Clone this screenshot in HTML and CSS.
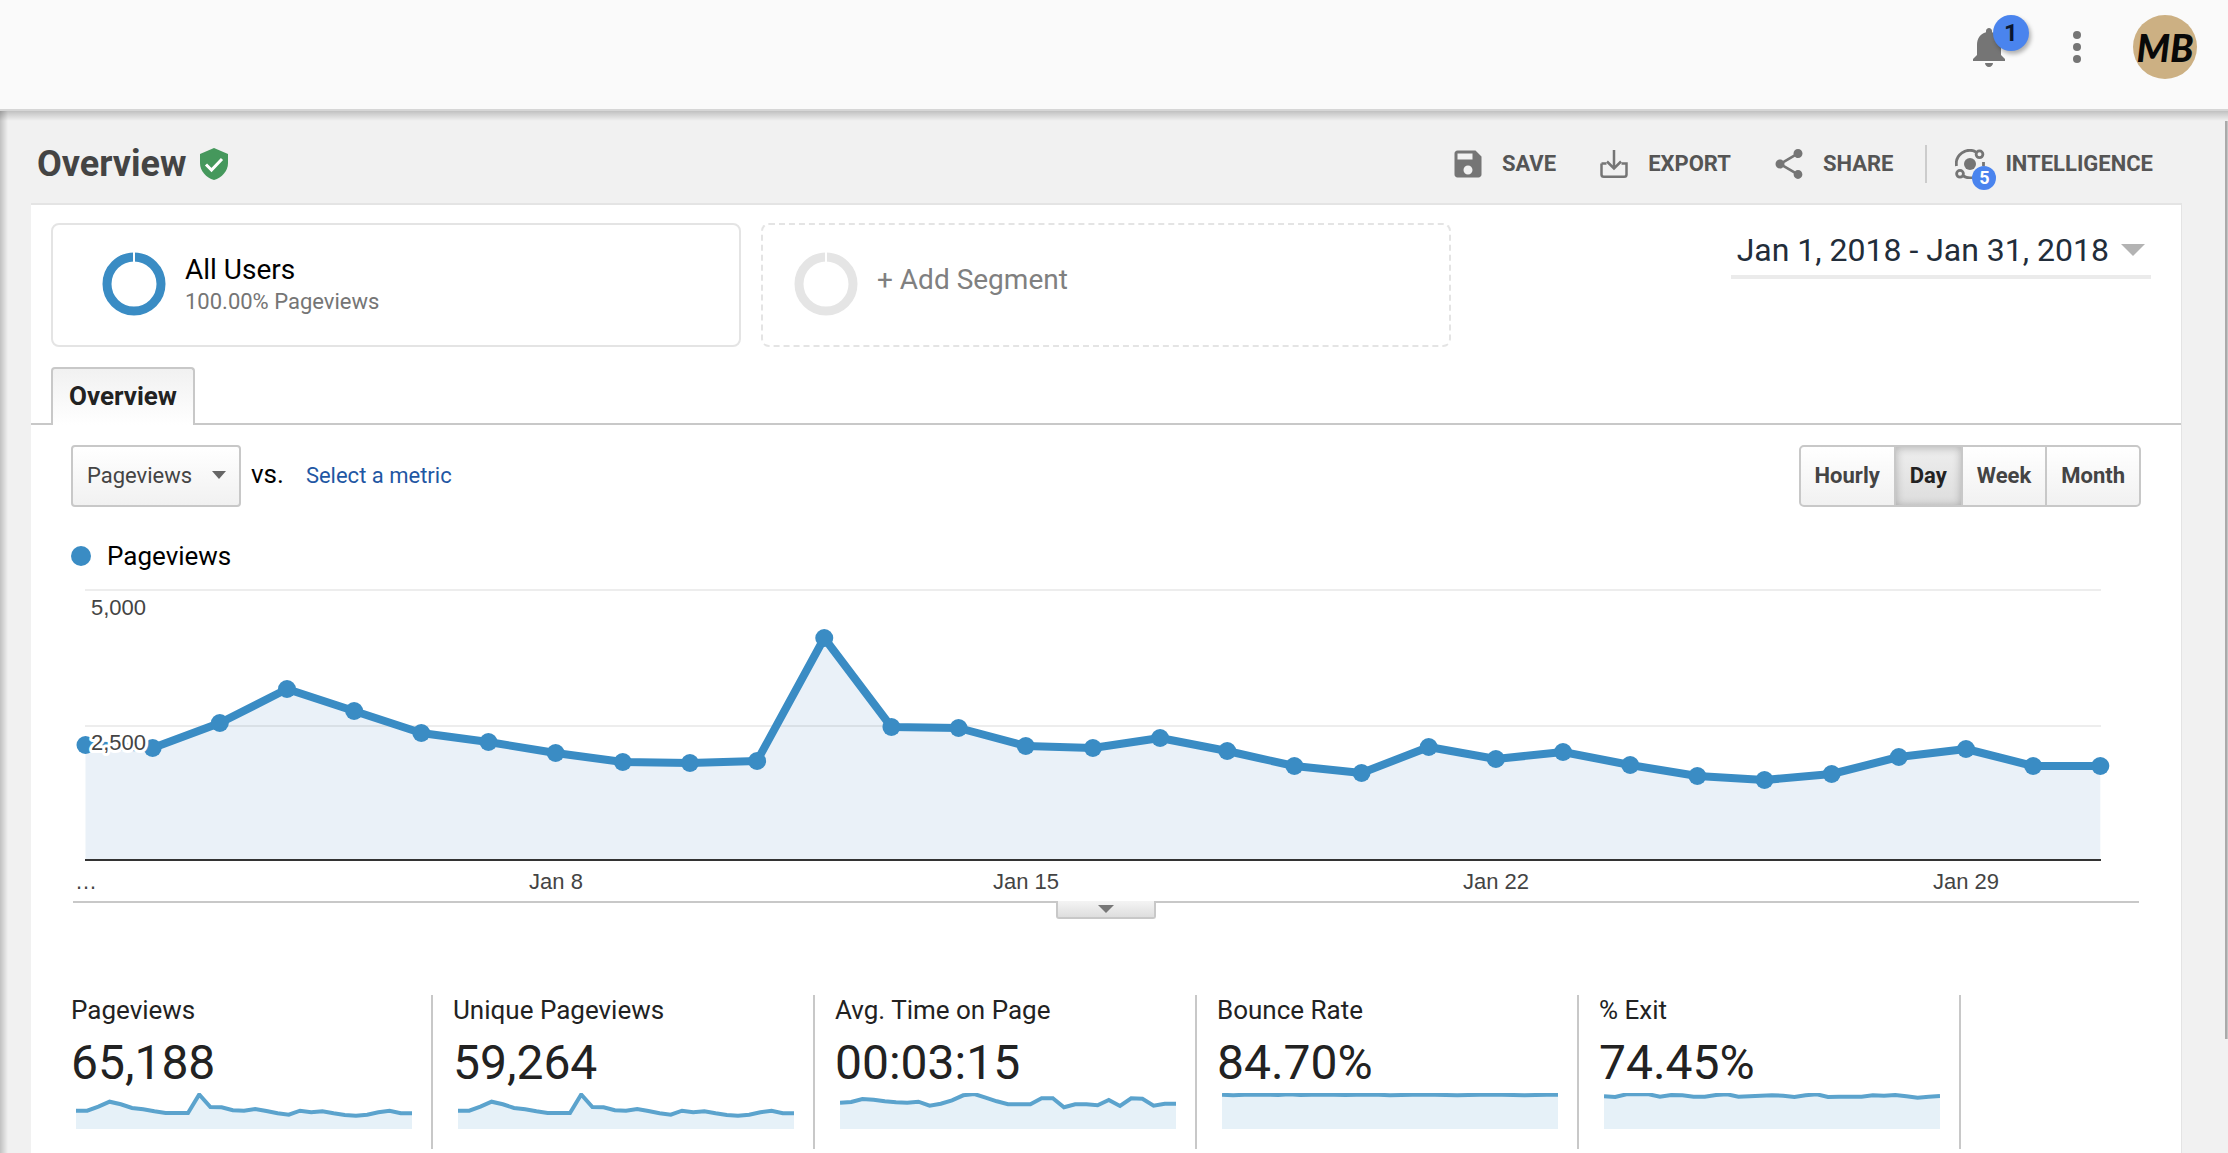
FILE: index.html
```html
<!DOCTYPE html>
<html lang="en">
<head>
<meta charset="utf-8">
<title>Overview</title>
<link rel="stylesheet" href="styles.css">
</head>
<body>
<header class="topbar">
  <button class="icon-button bell" type="button" aria-label="Notifications">
    <svg width="48" height="48" viewBox="0 0 24 24" fill="#757575"><path d="M12 22c1.1 0 2-.9 2-2h-4c0 1.1.9 2 2 2zM18 16v-5c0-3.070-1.640-5.640-4.500-6.320V4c0-.83-.67-1.500-1.500-1.500s-1.500.67-1.500 1.500v.68C7.630 5.360 6 7.920 6 11v5l-2 2v1h16v-1l-2-2z"/></svg>
    <span class="bell-count">1</span>
  </button>
  <button class="icon-button more" type="button" aria-label="More">
    <svg width="48" height="48" viewBox="0 0 24 24" fill="#757575"><circle cx="12" cy="6" r="2"/><circle cx="12" cy="12" r="2"/><circle cx="12" cy="18" r="2"/></svg>
  </button>
  <button class="avatar" type="button" aria-label="Account">MB</button>
</header>

<main class="report">
  <div class="title-row">
    <h1 class="title">Overview</h1>
    <svg class="shield" width="28" height="32" viewBox="0 0 28 32"><path d="M14 0L28 6v9c0 8-6 14.500-14 17C6 29.500 0 23 0 15V6z" fill="#45985c"/><path d="M6 16.500l5.500 5.500L22 11" fill="none" stroke="#fff" stroke-width="3"/></svg>
    <div class="actions">
      <button class="action" type="button">
        <svg width="28" height="30" viewBox="2.700 2 18.600 20" fill="#757575"><path d="M17 3H5c-1.110 0-2 .9-2 2v14c0 1.100.89 2 2 2h14c1.100 0 2-.9 2-2V7l-4-4zm-5 16c-1.660 0-3-1.340-3-3s1.340-3 3-3 3 1.340 3 3-1.340 3-3 3zm3-10H5V5h10v4z"/></svg>
        SAVE
      </button>
      <button class="action" type="button">
        <svg width="28" height="30" viewBox="0 0 28 30" fill="none" stroke="#757575" stroke-width="2.500"><path d="M14 1v19M7 12.500l7 7 7-7"/><path d="M1.500 14.500v11c0 1.500.8 2.300 2.300 2.300h20.400c1.500 0 2.300-.8 2.300-2.300v-11h-5M1.500 14.500h5"/></svg>
        EXPORT
      </button>
      <button class="action" type="button">
        <svg width="28" height="30" viewBox="2.700 2 18.600 20" fill="#757575"><path d="M18 16.080c-.76 0-1.440.3-1.960.77L8.910 12.700c.05-.23.09-.46.09-.7s-.04-.47-.09-.7l7.050-4.110c.54.5 1.250.81 2.040.81 1.660 0 3-1.340 3-3s-1.340-3-3-3-3 1.340-3 3c0 .24.04.47.09.7L8.040 9.810C7.500 9.310 6.790 9 6 9c-1.660 0-3 1.340-3 3s1.340 3 3 3c.79 0 1.500-.31 2.040-.81l7.120 4.160c-.05.21-.08.43-.08.65 0 1.610 1.310 2.920 2.920 2.920s2.920-1.310 2.920-2.920-1.310-2.920-2.920-2.920z"/></svg>
        SHARE
      </button>
      <span class="divider"></span>
      <button class="action" type="button">
        <span class="intel">
          <svg width="30" height="30" viewBox="0 0 30 30" fill="none" stroke="#757575" stroke-width="2.800"><circle cx="15" cy="15" r="6" fill="#757575" stroke="none"/><path d="M1.500 17A13.500 13.500 0 0 1 21 2.900M28.500 13v4M8 26.800a13.500 13.500 0 0 0 12 1.200"/><circle cx="24.500" cy="5.300" r="3.400"/><circle cx="5" cy="24.800" r="3.400"/></svg>
          <span class="intel-count">5</span>
        </span>
        INTELLIGENCE
      </button>
    </div>
  </div>

  <section class="panel">
    <div class="segments">
      <button class="segment" type="button">
        <svg width="64" height="64" viewBox="0 0 64 64"><circle cx="32" cy="32" r="27" fill="none" stroke="#3a8cc4" stroke-width="9"/><path d="M32 0v11" stroke="#fff" stroke-width="2"/></svg>
        <span class="segment-text"><span class="segment-name">All Users</span><span class="segment-share">100.00% Pageviews</span></span>
      </button>
      <button class="segment segment-add" type="button">
        <svg width="64" height="64" viewBox="0 0 64 64"><circle cx="32" cy="32" r="27" fill="none" stroke="#e5e5e5" stroke-width="9"/><path d="M32 0v11" stroke="#fff" stroke-width="2"/></svg>
        <span class="segment-name">+ Add Segment</span>
      </button>
      <button class="dates" type="button">Jan 1, 2018 - Jan 31, 2018
        <svg width="24" height="12" viewBox="0 0 24 12"><path d="M0 0h24L12 12z" fill="#b3b3b3"/></svg>
      </button>
    </div>

    <nav class="tabs"><a class="tab" href="#overview">Overview</a></nav>

    <div class="controls">
      <label class="metric-select">
        <select aria-label="Metric"><option>Pageviews</option></select>
        <svg width="14" height="8" viewBox="0 0 14 8"><path d="M0 0h14L7 8z" fill="#666"/></svg>
      </label>
      <span class="versus">vs.</span>
      <a class="metric-link" href="#metric">Select a metric</a>
      <div class="grain">
        <button type="button">Hourly</button>
        <button type="button" class="active" aria-pressed="true">Day</button>
        <button type="button">Week</button>
        <button type="button">Month</button>
      </div>
    </div>

    <div class="legend"><span class="legend-dot"></span>Pageviews</div>

    <div class="chart">
      <svg class="plot" viewBox="0 0 2066 328" role="img" aria-label="Pageviews by day">
        <path id="area" fill="#eaf1f8"/>
        <path d="M12 17H2028M12 153H2028" stroke="#000" stroke-opacity=".07" stroke-width="2"/>
        <path d="M12 287H2028" stroke="#333" stroke-width="2"/>
        <path id="line" fill="none" stroke="#3a8cc4" stroke-width="8" stroke-linejoin="round"/>
        <g id="dots" fill="#3a8cc4"></g>
        <g class="axis">
          <text class="halo" x="18" y="42">5,000</text>
          <text class="halo" x="18" y="177">2,500</text>
          <g text-anchor="middle">
            <text x="13" y="316">…</text>
            <text x="483" y="316">Jan 8</text>
            <text x="953" y="316">Jan 15</text>
            <text x="1423" y="316">Jan 22</text>
            <text x="1893" y="316">Jan 29</text>
          </g>
        </g>
      </svg>
    </div>
    <button class="handle" type="button" aria-label="Expand">
      <svg width="16" height="8" viewBox="0 0 16 8"><path d="M0 0h16L8 8z" fill="#777"/></svg>
    </button>

    <div class="metrics">
      <div class="metric"><div class="metric-name">Pageviews</div><div class="metric-value">65,188</div>
        <svg class="spark" viewBox="0 0 336 36" preserveAspectRatio="none" data-values="17.7,17.7,13.7,8.7,11.3,15,16.3,18.3,20,20,20,1.5,14,14.3,17.3,17.7,16,18,20.3,21.7,17.7,19.3,18.3,20.3,22,22.7,21.7,19.3,17.7,20.3,20.3"></svg></div>
      <div class="metric"><div class="metric-name">Unique Pageviews</div><div class="metric-value">59,264</div>
        <svg class="spark" viewBox="0 0 336 36" preserveAspectRatio="none" data-values="17.7,17.7,13.7,8.7,11.3,15,16.3,18.3,20,20,20,1.5,14,14.3,17.3,17.7,16,18,20.3,21.7,17.7,19.3,18.3,20.3,22,22.7,21.7,19.3,17.7,20.3,20.3"></svg></div>
      <div class="metric"><div class="metric-name">Avg. Time on Page</div><div class="metric-value">00:03:15</div>
        <svg class="spark" viewBox="0 0 336 36" preserveAspectRatio="none" data-values="9.7,9,6,6.7,8.3,9.3,9.7,8.7,12.7,10.7,7.3,2.3,1,4.7,8.3,11.3,11.3,11.3,5.3,5.3,14.3,11.3,11.3,12.3,7,13,5.3,5.7,12.7,10.7,10.7"></svg></div>
      <div class="metric"><div class="metric-name">Bounce Rate</div><div class="metric-value">84.70%</div>
        <svg class="spark" viewBox="0 0 336 36" preserveAspectRatio="none" data-values="1.7,2.3,1.7,1.7,1.7,2,1.3,2,1.7,1.7,1.7,2,1.7,1.7,1.7,2.3,2,1.7,1.7,1.7,2,2.3,2,1.7,1.7,1.7,2,2.3,2,1.7,1.7"></svg></div>
      <div class="metric"><div class="metric-name">% Exit</div><div class="metric-value">74.45%</div>
        <svg class="spark" viewBox="0 0 336 36" preserveAspectRatio="none" data-values="3.3,4,1.3,1,1.3,3.7,2,2.3,3.7,3.7,2,1.3,3.7,3.3,2.7,2.3,2.7,4,2.3,1.3,4,3.7,3.7,3.7,2.3,2.7,2,3.3,4.7,3.7,3"></svg></div>
    </div>
  </section>
  <span class="scroll-thumb"></span>
</main>
<script src="chart.js"></script>
</body>
</html>
```
FILE: styles.css
```css
* { box-sizing: border-box; }

body {
  margin: 0;
  min-height: 100vh;
  display: flex;
  flex-direction: column;
  background: #f1f1f1;
  color: #222;
  font-family: Roboto, "Liberation Sans", sans-serif;
}

button {
  margin: 0;
  padding: 0;
  border: 0;
  background: none;
  color: inherit;
  font: inherit;
  text-align: left;
}

svg { display: block; flex: none; }

.topbar {
  display: flex;
  justify-content: flex-end;
  align-items: center;
  height: 111px;
  padding: 0 31px 16px 0;
  border-bottom: 2px solid #d6d6d6;
  background: #fafafa;
}

.icon-button { position: relative; }
.more { margin: 0 32px 0 40px; }

.bell-count {
  position: absolute;
  left: 28px;
  top: -8px;
  width: 36px;
  height: 36px;
  border-radius: 50%;
  background: #4a84ee;
  box-shadow: 2px 3px 4px rgba(0, 0, 0, .3);
  color: #0b1730;
  font-size: 24px;
  font-weight: 700;
  line-height: 36px;
  text-align: center;
}

.avatar {
  width: 64px;
  height: 64px;
  border-radius: 50%;
  overflow: hidden;
  background: #ccb083;
  color: #080808;
  font-family: Lato, sans-serif;
  font-size: 38px;
  font-style: italic;
  font-weight: 900;
  line-height: 64px;
  text-align: center;
}

.report {
  position: relative;
  flex: 1;
  display: flex;
  flex-direction: column;
  padding: 0 46px 0 31px;
  background:
    linear-gradient(rgba(0, 0, 0, .2), transparent) 0 0 / 100% 10px no-repeat,
    linear-gradient(90deg, rgba(0, 0, 0, .2), transparent) 0 0 / 8px 100% no-repeat;
}

.title-row {
  display: flex;
  align-items: center;
  height: 92px;
  padding: 14px 29px 0 6px;
}

.title {
  margin: 0;
  color: #444;
  font-size: 36px;
  font-weight: 700;
  line-height: 44px;
}

.shield { margin-left: 14px; }

.actions {
  display: flex;
  align-items: center;
  gap: 44px;
  margin-left: auto;
}

.action {
  display: flex;
  align-items: center;
  gap: 20px;
  color: #555;
  font-size: 22px;
  font-weight: 700;
  line-height: 30px;
}

.divider {
  width: 2px;
  height: 38px;
  margin: 0 -16px 0 -12px;
  background: #ccc;
}

.intel { position: relative; }

.intel-count {
  position: absolute;
  left: 17px;
  top: 17px;
  width: 24px;
  height: 24px;
  border-radius: 50%;
  background: #4a84ee;
  color: #fff;
  font-size: 18px;
  line-height: 24px;
  text-align: center;
}

.panel {
  flex: 1;
  padding-top: 18px;
  border: solid #e4e4e4;
  border-width: 2px 1px 0 0;
  background: #fff;
}

.segments {
  display: flex;
  align-items: flex-start;
  gap: 20px;
  padding: 0 30px 0 20px;
}

.segment {
  display: flex;
  align-items: center;
  gap: 19px;
  flex: 0 1 690px;
  height: 124px;
  padding: 0 0 2px 49px;
  border: 2px solid #e4e4e4;
  border-radius: 8px;
}

.segment-add {
  padding-left: 31px;
  border-style: dashed;
  color: #808080;
}

.segment-text { color: #000; }
.segment-name, .segment-share { display: block; white-space: nowrap; }
.segment-name { font-size: 28px; line-height: 36px; }
.segment-add .segment-name { padding-bottom: 8px; }
.segment-share { color: #757575; font-size: 22px; line-height: 28px; }

.dates {
  display: flex;
  align-items: center;
  gap: 12px;
  height: 56px;
  margin-left: auto;
  padding: 2px 6px 0;
  border-bottom: 4px solid #ebebeb;
  color: #222d3a;
  font-size: 32px;
  white-space: nowrap;
}

.tabs {
  display: flex;
  height: 58px;
  margin-top: 20px;
  padding-left: 20px;
  border-bottom: 2px solid #c8c8c8;
}

.tab {
  height: 58px;
  padding: 0 16px;
  border: 2px solid #c8c8c8;
  border-bottom: 0;
  border-radius: 4px 4px 0 0;
  background: linear-gradient(#f1f1f1, #fff);
  color: #222;
  font-size: 26px;
  font-weight: 700;
  line-height: 54px;
  text-decoration: none;
}

.controls {
  display: flex;
  align-items: center;
  margin-top: 20px;
  padding: 0 40px;
  font-size: 22px;
}

.metric-select { position: relative; }

.metric-select select {
  appearance: none;
  display: block;
  width: 170px;
  height: 62px;
  padding: 0 14px 2px;
  border: 2px solid #c8c8c8;
  border-radius: 4px;
  background: linear-gradient(#fff, #f1f1f1);
  color: #444;
  font: inherit;
}

.metric-select svg { position: absolute; right: 15px; top: 26px; }
.versus { margin: 0 22px 0 10px; padding-bottom: 4px; color: #000; font-size: 26px; }
.metric-link { padding-bottom: 2px; color: #1f57a3; text-decoration: none; }

.grain {
  display: flex;
  margin-left: auto;
  border: 2px solid #c8c8c8;
  border-radius: 5px;
  background: linear-gradient(#fff, #f1f1f1);
}

.grain button {
  height: 58px;
  padding: 0 14px 2px;
  color: #444;
  font-weight: 700;
}

.grain button + button { border-left: 2px solid #c8c8c8; }

.grain .active {
  background: linear-gradient(#eee, #ddd);
  box-shadow: inset 0 1px 8px rgba(0, 0, 0, .25);
  color: #222;
}

.legend {
  display: flex;
  align-items: center;
  gap: 16px;
  margin-top: 32px;
  padding-left: 40px;
  color: #000;
  font-size: 26px;
  line-height: 34px;
}

.legend-dot {
  width: 20px;
  height: 20px;
  border-radius: 50%;
  background: #3a8cc4;
}

.chart {
  margin: 0 42px;
  border-bottom: 2px solid #c8c8c8;
}

.plot { width: 100%; overflow: visible; }
.axis { fill: #444; font-family: "Liberation Sans", Arial, sans-serif; font-size: 22px; }
.halo { paint-order: stroke; stroke: #fff; stroke-width: 6px; stroke-linejoin: round; }

.handle {
  display: flex;
  justify-content: center;
  width: 100px;
  height: 18px;
  margin: -2px auto 0;
  padding-top: 4px;
  border: solid #c8c8c8;
  border-width: 0 2px 2px;
  border-radius: 0 0 3px 3px;
  background: linear-gradient(#f4f4f4, #dedede);
  position: relative;
}

.metrics {
  display: grid;
  grid-template-columns: repeat(5, minmax(0, 382px));
  margin: 76px 0 0 20px;
}

.metric {
  height: 154px;
  padding: 0 19px 0 20px;
  border-right: 2px solid #c8c8c8;
  white-space: nowrap;
}

.metric-name { font-size: 26px; line-height: 30px; }
.metric-value { padding-top: 8px; font-size: 48px; line-height: 60px; }
.spark { width: 100%; height: 36px; padding-left: 5px; }

.scroll-thumb {
  position: absolute;
  right: 0;
  top: 10px;
  width: 3px;
  height: 918px;
  border-left: 2px solid #aaa;
  background: #c4c4c4;
}
```
FILE: chart.js
```js
const NS = 'http://www.w3.org/2000/svg';
const daily = [172, 175, 150, 116, 138, 160, 169, 180, 189, 190, 188, 65, 154, 155, 173, 175,
  165, 178, 193, 200, 174, 186, 179, 192, 203, 207, 201, 184, 176, 193, 193];
const step = 67.16;
const left = 12.5;
const points = daily.map((y, i) => [left + i * step, y]);
const path = 'M' + points.map(p => p.join(' ')).join('L');

document.getElementById('line').setAttribute('d', path);
document.getElementById('area').setAttribute('d', path + 'V287H' + left + 'Z');
points.forEach(([x, y]) => {
  const dot = document.createElementNS(NS, 'circle');
  dot.setAttribute('cx', x);
  dot.setAttribute('cy', y);
  dot.setAttribute('r', 9);
  document.getElementById('dots').append(dot);
});

document.querySelectorAll('.spark').forEach(svg => {
  const line = 'M' + svg.dataset.values.split(',').map((y, i) => i * 11.2 + ' ' + y).join('L');
  const area = document.createElementNS(NS, 'path');
  area.setAttribute('d', line + 'V36H0Z');
  area.setAttribute('fill', '#e6f1f8');
  const stroke = document.createElementNS(NS, 'path');
  stroke.setAttribute('d', line);
  stroke.setAttribute('fill', 'none');
  stroke.setAttribute('stroke', '#5ba3cd');
  stroke.setAttribute('stroke-width', 4);
  svg.append(area, stroke);
});
```
